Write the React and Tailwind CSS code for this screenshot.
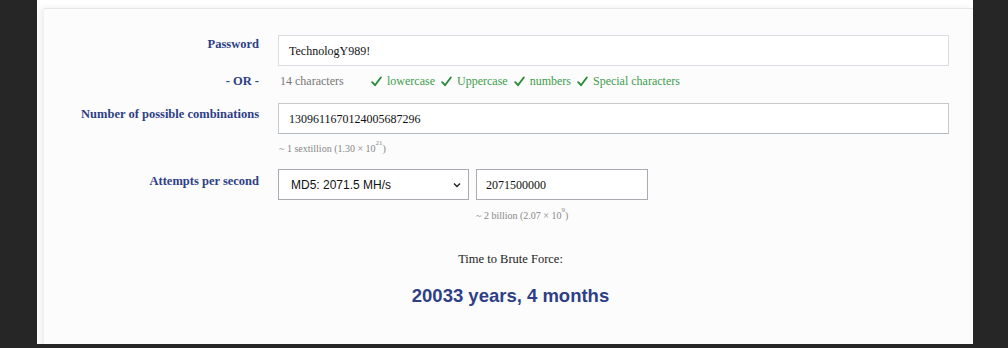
import React from "react";

const serif = { fontFamily: '"Liberation Serif", "Times New Roman", serif' };

function Label({ children }) {
  return (
    <div className="w-[215px] shrink-0 text-right font-bold text-[#2e3f86] text-[12.5px] leading-[16px]">
      {children}
    </div>
  );
}

function Check({ children }) {
  return (
    <span className="flex items-center gap-[5px]">
      <svg width="11" height="11" viewBox="0 0 11 11">
        <path d="M1.2 6.2 L4 9.2 L9.8 1.5" stroke="#2a8a3a" strokeWidth="1.9" fill="none" strokeLinecap="round" strokeLinejoin="round" />
      </svg>
      <span>{children}</span>
    </span>
  );
}

export default function App() {
  return (
    <div className="w-[1008px] h-[348px] bg-[#262626] overflow-hidden" style={serif}>
      <div className="ml-[37px] w-[936px] h-[344px] bg-white overflow-hidden">
        <div className="mt-[8px] ml-[7px] h-[340px] bg-[#fcfcfc] border-t border-[#e6e6e8] shadow-[-3px_0_6px_rgba(0,0,0,0.08)] pt-[26px]">
          {/* Password */}
          <div className="flex items-start">
            <div className="pt-[1px] flex">
              <Label>Password</Label>
            </div>
            <div className="ml-[19px] w-[671px] h-[31px] border border-[#dcdce2] bg-white flex items-center pl-[10px] text-[12px] text-[#111]">
              TechnologY989!
            </div>
          </div>
          {/* OR row */}
          <div className="flex items-center mt-[7px] h-[16px]">
            <Label>- OR -</Label>
            <div className="ml-[21px] flex items-center text-[12px]">
              <span className="text-[#777] w-[91px]">14 characters</span>
              <span className="text-[#3c9c4c] flex gap-[6px]">
                <Check>lowercase</Check>
                <Check>Uppercase</Check>
                <Check>numbers</Check>
                <Check>Special characters</Check>
              </span>
            </div>
          </div>
          {/* Combinations */}
          <div className="flex items-start mt-[14px]">
            <div className="pt-[3px] flex">
              <Label>Number of possible combinations</Label>
            </div>
            <div className="ml-[19px]">
              <div className="w-[671px] h-[31px] border border-[#c6c8cc] border-b-[#b2bac2] bg-white flex items-center pl-[10px] text-[12px] text-[#111]">
                1309611670124005687296
              </div>
              <div className="mt-[9px] pl-[1px] text-[10px] text-[#888] leading-[12px]">
                ~ 1 sextillion (1.30 × 10<sup className="text-[7px] align-[4px]">21</sup>)
              </div>
            </div>
          </div>
          {/* Attempts */}
          <div className="flex items-start mt-[14px]">
            <div className="pt-[4px] flex">
              <Label>Attempts per second</Label>
            </div>
            <div className="ml-[19px] flex gap-[7px]">
              <div
                className="w-[191px] h-[31px] border border-[#a9abb0] bg-white flex items-center justify-between pl-[12px] pr-[6px] text-[12px] text-[#111]"
                style={{ fontFamily: '"Liberation Sans", Arial, sans-serif' }}
              >
                <span>MD5: 2071.5 MH/s</span>
                <svg width="10" height="10" viewBox="0 0 10 10">
                  <path d="M2 3.5 L5 6.5 L8 3.5" stroke="#222" strokeWidth="1.4" fill="none" />
                </svg>
              </div>
              <div>
                <div className="w-[172px] h-[31px] border border-[#a9abb0] bg-white flex items-center pl-[9px] text-[12px] text-[#111]">
                  2071500000
                </div>
                <div className="mt-[10px] text-[10px] text-[#888] leading-[12px]">
                  ~ 2 billion (2.07 × 10<sup className="text-[7px] align-[4px]">9</sup>)
                </div>
              </div>
            </div>
          </div>
          {/* Result */}
          <div className="mt-[29px] pl-[4px] text-center text-[12.5px] text-[#222] leading-[16px]">
            Time to Brute Force:
          </div>
          <div
            className="mt-[18px] pl-[4px] text-center font-bold text-[18.5px] text-[#2e3f86] leading-[22px]"
            style={{ fontFamily: '"Liberation Sans", Arial, sans-serif' }}
          >
            20033 years, 4 months
          </div>
        </div>
      </div>
    </div>
  );
}
